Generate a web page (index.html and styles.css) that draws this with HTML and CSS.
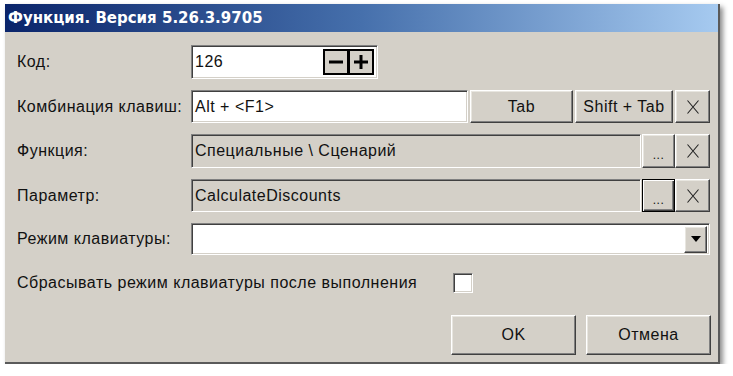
FILE: index.html
```html
<!DOCTYPE html>
<html lang="ru">
<head>
<meta charset="utf-8">
<title>Функция</title>
<link rel="stylesheet" href="styles.css">
</head>
<body>
<div class="dialog">
  <div class="titlebar">Функция. Версия 5.26.3.9705</div>
  <div class="content">
    <div class="row r1">
      <div class="label">Код:</div>
      <div class="ctrl">
        <div class="field white w-code">
          <span class="val">126</span>
          <div class="spin">
            <div class="spinbtn">
              <svg width="16" height="16" viewBox="0 0 16 16"><rect x="1" y="6.5" width="14" height="3" fill="#000"/></svg>
            </div>
            <div class="spinbtn">
              <svg width="16" height="16" viewBox="0 0 16 16"><rect x="1" y="6.5" width="14" height="3" fill="#000"/><rect x="6.5" y="1" width="3" height="14" fill="#000"/></svg>
            </div>
          </div>
        </div>
      </div>
    </div>
    <div class="row r2">
      <div class="label">Комбинация клавиш:</div>
      <div class="ctrl gap2">
        <div class="field white grow"><span class="val">Alt + &lt;F1&gt;</span></div>
        <div class="btn b-tab">Tab</div>
        <div class="btn b-stab">Shift + Tab</div>
        <div class="btn b-x">
          <svg width="14" height="16" viewBox="0 0 14 16"><path d="M1.5 1.5 L12.5 14.5 M12.5 1.5 L1.5 14.5" stroke="#222" stroke-width="1.1" fill="none"/></svg>
        </div>
      </div>
    </div>
    <div class="row r3">
      <div class="label">Функция:</div>
      <div class="ctrl">
        <div class="field gray grow"><span class="val">Специальные \ Сценарий</span></div>
        <div class="btn b-dots"><span class="dots">...</span></div>
        <div class="btn b-x">
          <svg width="14" height="16" viewBox="0 0 14 16"><path d="M1.5 1.5 L12.5 14.5 M12.5 1.5 L1.5 14.5" stroke="#222" stroke-width="1.1" fill="none"/></svg>
        </div>
      </div>
    </div>
    <div class="row r4">
      <div class="label">Параметр:</div>
      <div class="ctrl">
        <div class="field gray grow"><span class="val">CalculateDiscounts</span></div>
        <div class="btn b-dots focused"><span class="dots">...</span></div>
        <div class="btn b-x">
          <svg width="14" height="16" viewBox="0 0 14 16"><path d="M1.5 1.5 L12.5 14.5 M12.5 1.5 L1.5 14.5" stroke="#222" stroke-width="1.1" fill="none"/></svg>
        </div>
      </div>
    </div>
    <div class="row r5">
      <div class="label">Режим клавиатуры:</div>
      <div class="ctrl">
        <div class="field white grow combo">
          <div class="btn arrow">
            <svg width="12" height="8" viewBox="0 0 12 8"><path d="M1 1 L11 1 L6 7 Z" fill="#000"/></svg>
          </div>
        </div>
      </div>
    </div>
    <div class="checkrow">
      <div class="checklabel">Сбрасывать режим клавиатуры после выполнения</div>
      <div class="checkbox"></div>
    </div>
    <div class="buttons">
      <div class="btn big">OK</div>
      <div class="btn big">Отмена</div>
    </div>
  </div>
</div>
</body>
</html>
```
FILE: styles.css
```css
html, body {
  margin: 0;
  padding: 0;
  background: #ffffff;
}
body {
  font-family: "Liberation Sans", Arial, sans-serif;
  font-size: 16px;
  letter-spacing: 0.5px;
  color: #111;
}
.dialog {
  margin: 4px 0 0 5px;
  width: 715px;
  height: 360px;
  box-sizing: border-box;
  background: #d4d0c8;
  border-right: 2px solid #5a5a5a;
  border-bottom: 2px solid #5a5a5a;
  box-shadow: 3px 3px 5px rgba(0, 0, 0, 0.45);
  display: flex;
  flex-direction: column;
}
.titlebar {
  height: 28px;
  line-height: 28px;
  padding-left: 3px;
  background: linear-gradient(to right, #0a246a 0%, #4670ac 50%, #a6caf0 100%);
  color: #fff;
  font-family: "DejaVu Sans", Verdana, sans-serif;
  font-weight: bold;
  font-size: 15px;
  letter-spacing: 0;
  white-space: nowrap;
}
.content {
  padding: 13px 8px 0 12px;
  display: flex;
  flex-direction: column;
}
.row {
  display: flex;
  align-items: center;
  margin-bottom: 11px;
}
.r1 { height: 34px; }
.r2 { height: 33px; }
.r3 { height: 34px; }
.r4 { height: 33px; margin-bottom: 11px; }
.r5 { height: 32px; margin-bottom: 0; }
.label {
  width: 174px;
  flex: none;
  white-space: nowrap;
}
.ctrl {
  flex: 1;
  display: flex;
  height: 100%;
}
.gap2 { gap: 2px; }
.field {
  box-sizing: border-box;
  height: 100%;
  border: 1px solid;
  border-color: #808080 #ffffff #ffffff #808080;
  box-shadow: inset 1px 1px 0 #404040, inset -1px -1px 0 #d4d0c8;
  display: flex;
  align-items: center;
  padding-left: 3px;
}
.white { background: #fff; }
.gray { background: #d4d0c8; }
.grow { flex: 1; }
.w-code {
  width: 187px;
  flex: none;
  padding-right: 3px;
}
.val {
  flex: 1;
  white-space: nowrap;
}
.spin {
  display: flex;
  height: 26px;
}
.spinbtn {
  box-sizing: border-box;
  width: 26px;
  height: 26px;
  background: #d4d0c8;
  border: 2px solid #000;
  display: flex;
  align-items: center;
  justify-content: center;
}
.spinbtn + .spinbtn { margin-left: -1px; }
.btn {
  box-sizing: border-box;
  height: 100%;
  background: #d4d0c8;
  border: 1px solid;
  border-color: #ffffff #404040 #404040 #ffffff;
  box-shadow: inset -1px -1px 0 #808080, inset 1px 1px 0 #e8e6e0;
  display: flex;
  align-items: center;
  justify-content: center;
  white-space: nowrap;
  flex: none;
}
.b-tab { width: 103px; }
.b-stab { width: 98px; }
.b-x { width: 35px; }
.b-dots { width: 33px; margin-left: 1px; }
.dots {
  font-size: 12px;
  padding-top: 8px;
}
.focused {
  border: 1px solid #000;
  box-shadow: inset 1px 1px 0 #ffffff, inset -1px -1px 0 #404040, inset -2px -2px 0 #808080;
}
.combo {
  justify-content: flex-end;
  padding: 0 2px 0 0;
}
.arrow {
  width: 23px;
  height: 27px;
}
.checkrow {
  display: flex;
  align-items: center;
  height: 22px;
  margin-top: 17px;
}
.checklabel {
  width: 436px;
  flex: none;
  white-space: nowrap;
}
.checkbox {
  box-sizing: border-box;
  width: 20px;
  height: 20px;
  background: #fff;
  border: 1px solid;
  border-color: #808080 #ffffff #ffffff #808080;
  box-shadow: inset 1px 1px 0 #404040, inset -1px -1px 0 #d4d0c8;
}
.buttons {
  display: flex;
  justify-content: flex-end;
  gap: 10px;
  margin-top: 21px;
  margin-right: -1px;
}
.big {
  width: 125px;
  height: 40px;
}
```
